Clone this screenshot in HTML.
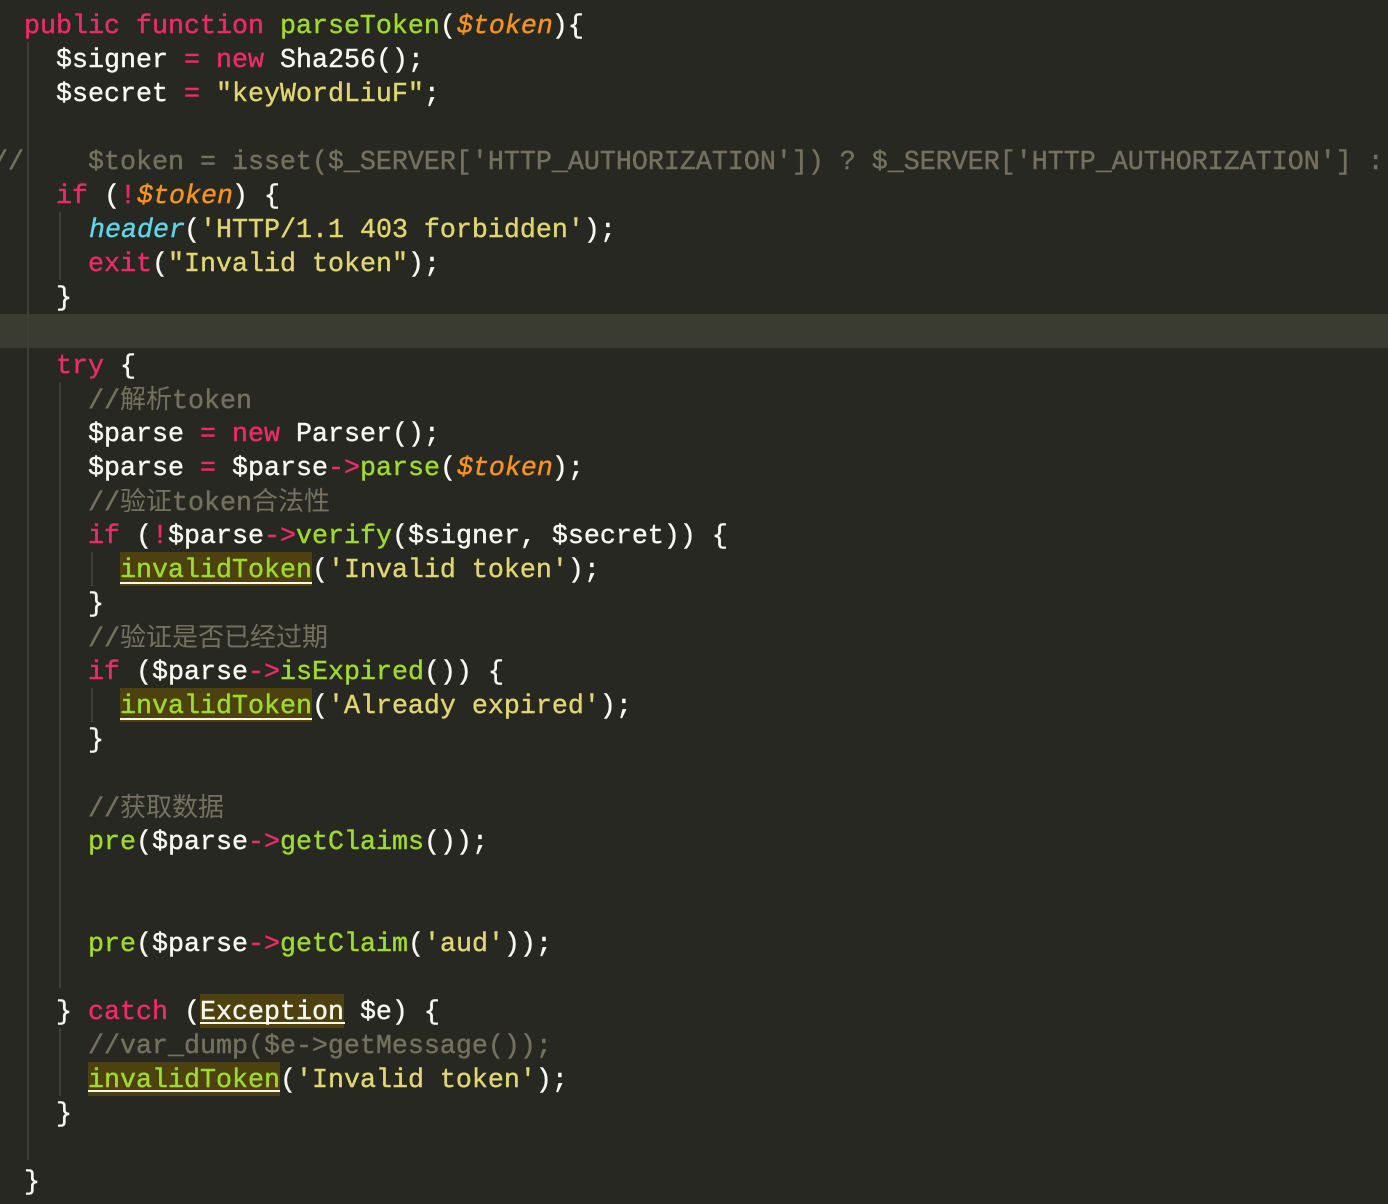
<!DOCTYPE html>
<html>
<head>
<meta charset="utf-8">
<style>
html,body{margin:0;padding:0;background:#272822;}
#c{position:relative;width:1388px;height:1204px;overflow:hidden;background:#272822;}
.l{position:absolute;left:24px;height:34px;margin-top:2px;line-height:34px;white-space:pre;font-family:"Liberation Mono","Noto Sans CJK SC",monospace;font-size:26.67px;color:#f8f8f2;-webkit-text-stroke:0.4px currentColor;}
.k{margin-top:-1px;}
.g{position:absolute;width:2px;background:#3e3f39;}
.p{color:#ee2a6c}.n{color:#9fdb2c}.y{color:#e0d672}.o{color:#f8931f;font-style:italic;position:relative;left:1px}.b{color:#62d4ea;font-style:italic;position:relative;left:1px}.c{color:#75715e}
.z{font-size:26px;font-family:"Noto Sans CJK SC","Liberation Sans",sans-serif;-webkit-text-stroke:0;}
.h{position:absolute;height:34px;background:#4d4110;}
.u{position:absolute;height:2px;background:#f8f8f2;}
</style>
</head>
<body>
<div id="c">
<div style="position:absolute;left:0;top:314px;width:1388px;height:34px;background:#3b3c31"></div>

<div class="g" style="left:27px;top:42px;height:1118px"></div>
<div class="g" style="left:59px;top:212px;height:68px"></div>
<div class="g" style="left:59px;top:382px;height:606px"></div>
<div class="g" style="left:59px;top:1028px;height:68px"></div>
<div class="g" style="left:91px;top:552px;height:34px"></div>
<div class="g" style="left:91px;top:688px;height:34px"></div>

<div class="h" style="left:120px;top:552px;width:192px"></div>
<div class="h" style="left:120px;top:688px;width:192px"></div>
<div class="h" style="left:200px;top:994px;width:144px"></div>
<div class="h" style="left:88px;top:1062px;width:192px"></div>

<div class="l" style="top:8px"><span class="p">public function</span> <span class="n">parseToken</span>(<span class="o">$token</span>){</div>
<div class="l" style="top:42px">  $signer <span class="p">=</span> <span class="p">new</span> Sha256();</div>
<div class="l" style="top:76px">  $secret <span class="p">=</span> <span class="y">"keyWordLiuF"</span>;</div>
<div class="l c" style="top:144px;left:-8px">//    $token = isset($_SERVER['HTTP_AUTHORIZATION']) ? $_SERVER['HTTP_AUTHORIZATION'] :</div>
<div class="l" style="top:178px">  <span class="p">if</span> (<span class="p">!</span><span class="o">$token</span>) {</div>
<div class="l" style="top:212px">    <span class="b">header</span>(<span class="y">'HTTP/1.1 403 forbidden'</span>);</div>
<div class="l" style="top:246px">    <span class="p">exit</span>(<span class="y">"Invalid token"</span>);</div>
<div class="l" style="top:280px">  }</div>
<div class="l" style="top:348px">  <span class="p">try</span> {</div>
<div class="l c k" style="top:382px">    //<span class="z">解析</span>token</div>
<div class="l" style="top:416px">    $parse <span class="p">=</span> <span class="p">new</span> Parser();</div>
<div class="l" style="top:450px">    $parse <span class="p">=</span> $parse<span class="p">-&gt;</span><span class="n">parse</span>(<span class="o">$token</span>);</div>
<div class="l c k" style="top:484px">    //<span class="z">验证</span>token<span class="z">合法性</span></div>
<div class="l" style="top:518px">    <span class="p">if</span> (<span class="p">!</span>$parse<span class="p">-&gt;</span><span class="n">verify</span>($signer, $secret)) {</div>
<div class="l" style="top:552px">      <span class="n">invalidToken</span>(<span class="y">'Invalid token'</span>);</div>
<div class="l" style="top:586px">    }</div>
<div class="l c k" style="top:620px">    //<span class="z">验证是否已经过期</span></div>
<div class="l" style="top:654px">    <span class="p">if</span> ($parse<span class="p">-&gt;</span><span class="n">isExpired</span>()) {</div>
<div class="l" style="top:688px">      <span class="n">invalidToken</span>(<span class="y">'Already expired'</span>);</div>
<div class="l" style="top:722px">    }</div>
<div class="l c k" style="top:790px">    //<span class="z">获取数据</span></div>
<div class="l" style="top:824px">    <span class="n">pre</span>($parse<span class="p">-&gt;</span><span class="n">getClaims</span>());</div>
<div class="l" style="top:926px">    <span class="n">pre</span>($parse<span class="p">-&gt;</span><span class="n">getClaim</span>(<span class="y">'aud'</span>));</div>
<div class="l" style="top:994px">  } <span class="p">catch</span> (Exception $e) {</div>
<div class="l c" style="top:1028px">    //var_dump($e-&gt;getMessage());</div>
<div class="l" style="top:1062px">    <span class="n">invalidToken</span>(<span class="y">'Invalid token'</span>);</div>
<div class="l" style="top:1096px">  }</div>
<div class="l" style="top:1164px">}</div>

<div class="u" style="left:120px;top:582px;width:192px"></div>
<div class="u" style="left:120px;top:718px;width:192px"></div>
<div class="u" style="left:200px;top:1022px;width:145px"></div>
<div class="u" style="left:88px;top:1090px;width:192px"></div>
</div>
</body>
</html>
